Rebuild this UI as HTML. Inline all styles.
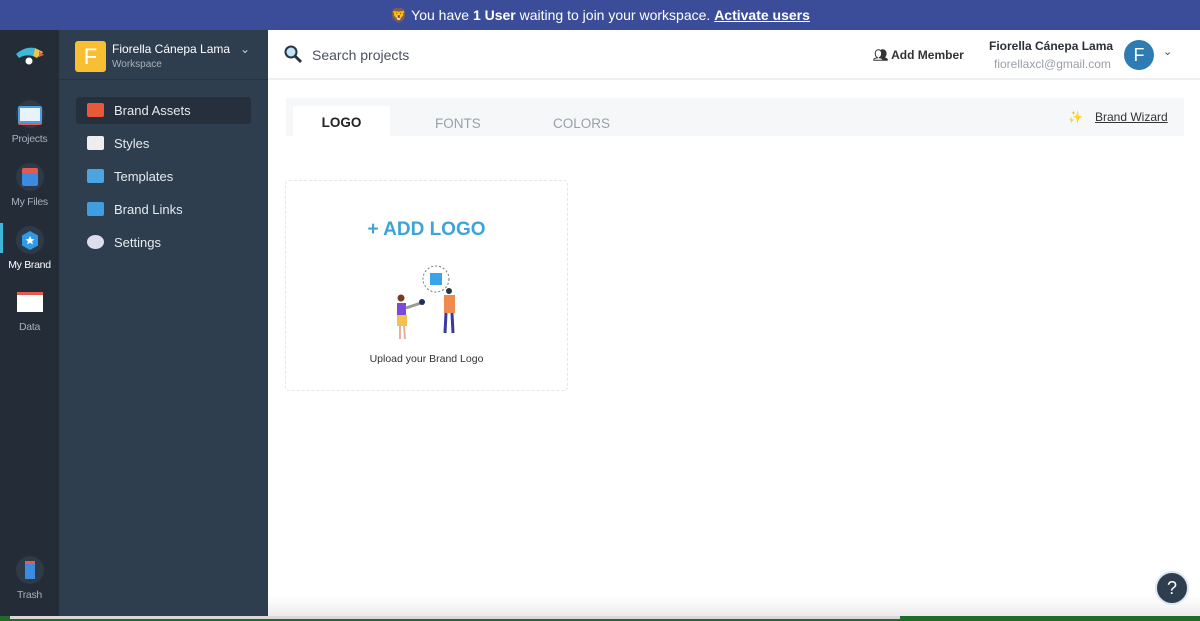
<!DOCTYPE html><html><head><meta charset="utf-8"><style>
*{box-sizing:border-box;margin:0;padding:0}
body{width:1200px;height:621px;overflow:hidden;font-family:"Liberation Sans",sans-serif;background:#fff;position:relative}
.top{position:absolute;left:0;top:0;width:1200px;height:30px;background:#3b4d99;color:#fff;font-size:14px;text-align:center;line-height:31px}
.rail{position:absolute;left:0;top:30px;width:59px;height:586px;background:#242c37}
.side{position:absolute;left:59px;top:30px;width:209px;height:586px;background:#2f3e4e}
.ri{position:absolute;left:0;width:59px;text-align:center;color:#a8b0ba;font-size:10.5px;letter-spacing:-0.3px}
.ri .ic{width:28px;height:28px;border-radius:50%;background:#2f3a48;margin:0 auto 5px;display:flex;align-items:center;justify-content:center}
.mi{position:absolute;left:17px;width:175px;height:27px;color:#e6eaee;font-size:13px;line-height:27px;padding-left:38px}
.mi i{position:absolute;left:11px;top:6px;width:17px;height:14px;border-radius:2px}
.main{position:absolute;left:268px;top:30px;width:932px;height:586px}
.hdr{height:50px;border-bottom:2px solid #eef0f2;position:relative}
</style></head><body>
<div class="top">🦁 You have <b>1 User</b> waiting to join your workspace. <b><u>Activate users</u></b></div>
<div class="rail">
<svg style="position:absolute;left:15px;top:16px" width="30" height="22" viewBox="0 0 30 22"><path d="M1 8 Q10 0 20 2 L18 10 Q10 8 4 12Z" fill="#3fb7d8"/><path d="M20 2 L28 6 L22 12 L18 10Z" fill="#e6c84a"/><path d="M24 5 L29 9 L24 11Z" fill="#e35b4f"/><circle cx="14" cy="15" r="3.5" fill="#fff"/></svg>
<div class="ri" style="top:70px"><div class="ic"><div style="width:24px;height:17px;background:#e8f2fb;border:2px solid #4a9be0;border-radius:2px;box-shadow:0 2px 0 #e35b4f"></div></div>Projects</div>
<div class="ri" style="top:133px"><div class="ic"><div style="width:16px;height:18px;background:#3d8be0;border-top:5px solid #e35b4f;border-radius:2px"></div></div>My Files</div>
<div style="position:absolute;left:0;top:193px;width:3px;height:30px;background:#3fb7d8"></div>
<div class="ri" style="top:196px;color:#fff"><div class="ic"><svg width="18" height="19" viewBox="0 0 18 19"><path d="M9 0 L17 4.5 V14.5 L9 19 L1 14.5 V4.5Z" fill="#2f9ae8"/><path d="M9 5 L10.4 8 L13.5 8.3 L11.1 10.3 L11.9 13.4 L9 11.7 L6.1 13.4 L6.9 10.3 L4.5 8.3 L7.6 8Z" fill="#fff"/></svg></div>My Brand</div>
<div class="ri" style="top:258px"><div class="ic" style="background:none"><div style="width:26px;height:20px;background:#fff;border-top:3px solid #e35b4f"></div></div>Data</div>
<div class="ri" style="top:526px"><div class="ic"><div style="width:10px;height:18px;background:#3d8be0;border-top:3px solid #e35b4f"></div></div>Trash</div>
</div>
<div class="side">
<div style="position:absolute;left:16px;top:11px;width:31px;height:31px;background:#f8bf32;border-radius:3px;color:#fff;font-size:22px;text-align:center;line-height:31px">F</div>
<div style="position:absolute;left:53px;top:12px;color:#fff;font-size:12px">Fiorella Cánepa Lama</div>
<div style="position:absolute;left:53px;top:29px;color:#a8b0ba;font-size:10px">Workspace</div>
<div style="position:absolute;left:181px;top:12px;color:#ccd;font-size:12px">⌄</div>
<div style="position:absolute;left:0;top:49px;width:209px;height:1px;background:#28323f"></div>
<div class="mi" style="top:67px;background:#26303c;border-radius:3px"><i style="background:#e8593c"></i>Brand Assets</div>
<div class="mi" style="top:100px"><i style="background:#eee"></i>Styles</div>
<div class="mi" style="top:133px"><i style="background:#4aa5e0"></i>Templates</div>
<div class="mi" style="top:166px"><i style="background:#3f9ee0"></i>Brand Links</div>
<div class="mi" style="top:199px"><i style="background:#dde;border-radius:50%"></i>Settings</div>
</div>
<div class="main">
<div class="hdr">
<svg style="position:absolute;left:16px;top:15px" width="19" height="19" viewBox="0 0 19 19"><circle cx="7" cy="7" r="5.5" fill="#bfe3f7" stroke="#2a3340" stroke-width="2"/><path d="M11 11 L17 17" stroke="#2a3340" stroke-width="3"/></svg>
<div style="position:absolute;left:44px;top:17px;font-size:14px;color:#4a5160">Search projects</div>
<div style="position:absolute;left:605px;top:18px;font-size:12px;color:#333;font-weight:bold">👥︎ Add Member</div>
<div style="position:absolute;left:721px;top:9px;font-size:12px;color:#2a2f38;font-weight:bold">Fiorella Cánepa Lama</div>
<div style="position:absolute;left:726px;top:27px;font-size:12px;color:#9aa0a8">fiorellaxcl@gmail.com</div>
<div style="position:absolute;left:856px;top:10px;width:30px;height:30px;border-radius:50%;background:#2f7cb3;color:#fff;text-align:center;line-height:30px;font-size:18px">F</div>
<div style="position:absolute;left:895px;top:15px;font-size:11px;color:#444">⌄</div>
</div>
<div style="position:absolute;left:18px;top:68px;width:898px;height:38px;background:#f5f7f9"></div>
<div style="position:absolute;left:25px;top:76px;width:97px;height:30px;background:#fff;text-align:center;line-height:33px;font-size:13.5px;font-weight:bold;color:#222">LOGO</div>
<div style="position:absolute;left:167px;top:86px;font-size:13.5px;color:#9aa0a8">FONTS</div>
<div style="position:absolute;left:285px;top:86px;font-size:13.5px;color:#9aa0a8">COLORS</div>
<div style="position:absolute;left:800px;top:80px;font-size:12px;color:#333">✨</div>
<div style="position:absolute;left:827px;top:80px;font-size:12px;color:#333;text-decoration:underline">Brand Wizard</div>
<div style="position:absolute;left:17px;top:150px;width:283px;height:211px;border:1px dashed #e3e6ea;border-radius:4px">
<div style="position:absolute;left:0;top:38px;width:281px;text-align:center;font-size:19px;font-weight:bold;color:#3ea4d6">+ ADD LOGO</div>
<svg style="position:absolute;left:105px;top:84px" width="75" height="80" viewBox="0 0 75 80"><circle cx="45" cy="14" r="13" fill="none" stroke="#777" stroke-dasharray="2 2"/><rect x="39" y="8" width="12" height="12" fill="#3aa3ea"/><rect x="53" y="30" width="11" height="18" fill="#f08a4f"/><path d="M55 48 L54 68 M61 48 L62 68" stroke="#3b3a9a" stroke-width="3"/><circle cx="58" cy="26" r="3" fill="#2a3340"/><rect x="6" y="38" width="9" height="12" fill="#7b4ad8"/><rect x="6" y="50" width="10" height="11" fill="#f2c14e"/><circle cx="10" cy="33" r="3.5" fill="#7a3a2a"/><path d="M9 61 L9 74 M13 61 L14 74" stroke="#e8b0a0" stroke-width="2"/><path d="M15 43 L30 38" stroke="#999" stroke-width="3"/><circle cx="31" cy="37" r="3" fill="#1f2f5a"/></svg>
<div style="position:absolute;left:0;top:172px;width:281px;text-align:center;font-size:10.5px;color:#333">Upload your Brand Logo</div>
</div>
</div>
<div style="position:absolute;left:268px;top:596px;width:932px;height:20px;background:linear-gradient(#fff,#ececec)"></div>
<div style="position:absolute;left:1155px;top:571px;width:34px;height:34px;border-radius:50%;background:#2f3e4e;border:2px solid #dbe6f2;color:#fff;text-align:center;line-height:30px;font-size:18px;z-index:5">?</div>
<div style="position:absolute;left:0;top:616px;width:1200px;height:5px;background:#1f6b2a"></div>
<div style="position:absolute;left:10px;top:616px;width:890px;height:3px;background:#d8d8d8"></div>
</body></html>
